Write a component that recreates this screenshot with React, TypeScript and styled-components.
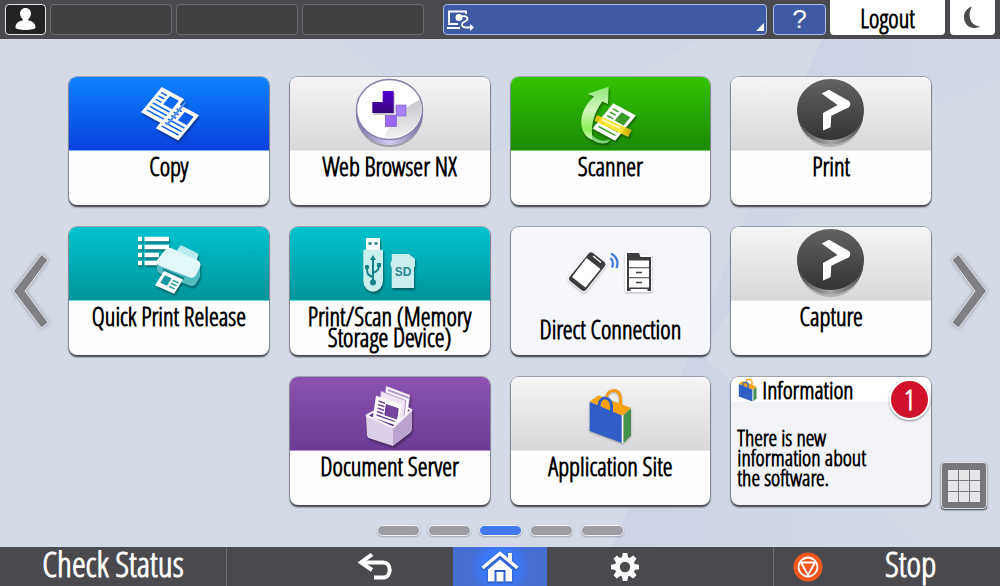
import React from "react";
import styled, { createGlobalStyle, css } from "styled-components";

const GlobalStyle = createGlobalStyle`
  * { box-sizing: border-box; }
  body { margin: 0; }
  body, button {
    font-family: "Open Sans Condensed Light", "Roboto Condensed", sans-serif;
    font-weight: 600;
  }
  button { margin: 0; padding: 0; border: 0; background: none; color: inherit; cursor: pointer; }
  svg { display: block; }
`;

const Page = styled.div`
  display: flex;
  flex-direction: column;
  min-height: 100vh;
  background: #d4dbe7;
`;

const StatusBar = styled.header`
  display: flex;
  align-items: flex-start;
  height: 39px;
  padding: 0 5px;
  background: #4a494e;
`;

const UserButton = styled.button`
  display: flex;
  justify-content: center;
  align-items: center;
  width: 41px;
  height: 31px;
  margin: 4px 4px 0 0;
  border: 1px solid #e4e4e6;
  border-radius: 4px;
  background: #232323;
`;

const Slots = styled.div`
  display: flex;
  flex: 374 1 0;
  gap: 4px;
  margin: 4px 19px 0 0;
`;

const Slot = styled.div`
  flex: 1;
  height: 31px;
  border: 1px solid #6c6b70;
  border-radius: 4px;
  background: #414141;
`;

const MessageBar = styled.button`
  display: flex;
  flex: 317 1 0;
  justify-content: space-between;
  align-items: flex-end;
  height: 31px;
  margin: 4px 6px 0 0;
  padding: 0 2px 3px 3px;
  border: 1px solid #a9bce6;
  border-radius: 4px;
  background: #3d5aa2;
`;

const HelpButton = styled.button`
  width: 53px;
  height: 31px;
  margin: 4px 4px 0 0;
  border: 1px solid #a9bce6;
  border-radius: 4px;
  background: #3d5aa2;
  color: #fff;
  font: 600 26px/29px "Liberation Sans", sans-serif;
  font-weight: 400;
`;

const BarButton = styled.button<{ $width: number }>`
  display: flex;
  justify-content: center;
  align-items: center;
  width: ${(p) => p.$width}px;
  height: 35px;
  border-radius: 0 0 4px 4px;
  background: #fff;
  color: #000;
  font-size: 25px;
  & + & { margin-left: 5px; }
`;

const Main = styled.main`
  position: relative;
  display: flex;
  flex: 1;
  flex-direction: column;
  padding-top: 38px;
`;

const Backdrop = styled.svg`
  position: absolute;
  inset: 0;
  width: 100%;
  height: 100%;
`;

const Stage = styled.div`
  position: relative;
  display: grid;
  grid-template-columns: 69px 1fr 69px;
`;

const Rail = styled.div`
  display: grid;
  grid-template-rows: 1fr auto 1fr;
  justify-items: center;
`;

const ArrowButton = styled.button<{ $side: "left" | "right" }>`
  grid-row: 2;
  justify-self: ${(p) => (p.$side === "left" ? "start" : "end")};
  margin: 0 10px 4px;
`;

const KeypadButton = styled.button`
  display: grid;
  grid-row: 3;
  grid-template-columns: repeat(3, 10px);
  align-self: end;
  align-content: center;
  justify-content: center;
  gap: 1px;
  width: 46px;
  height: 47px;
  margin-right: 4px;
  border: 1px solid #dfe0e4;
  border-radius: 4px;
  background: #77767b;
  box-shadow: 0 1px 2px #3a3a40;
`;

const Key = styled.span`
  height: 10px;
  background: #e6e6e8;
`;

const Tiles = styled.div`
  display: grid;
  grid-template-columns: repeat(4, 1fr);
  gap: 22px 21px;
  padding-bottom: 4px;
`;

const tileBox = css`
  display: flex;
  flex-direction: column;
  min-height: 128px;
  border-radius: 8px;
  box-shadow: 0 0 0 1px rgba(90, 90, 105, 0.45), 0 2px 2px #333339;
`;

const Tile = styled.button<{ $plain?: boolean; $column?: number }>`
  ${tileBox}
  grid-column: ${(p) => p.$column ?? "auto"};
  overflow: hidden;
  background: ${(p) => (p.$plain ? "#f6f7fb" : "#fefefe")};
`;

const banners = {
  blue: "linear-gradient(#0b82ff, #0a40dc)",
  grey: "linear-gradient(#f5f5f6, #d8d7d9)",
  green: "linear-gradient(#34c400, #1b8a04)",
  teal: "linear-gradient(#00c4cf, #00949b)",
  purple: "linear-gradient(#8c52b2, #6a3c95)",
  none: "none",
};
type BannerTone = keyof typeof banners;

const edges: Record<BannerTone, string> = {
  blue: "#6cb4ff",
  grey: "#e8e8ea",
  green: "#6edc4c",
  teal: "#54dde2",
  purple: "#b58fd0",
  none: "transparent",
};

const Banner = styled.span<{ $tone: BannerTone }>`
  display: flex;
  justify-content: center;
  width: 100%;
  height: 74px;
  border-bottom: 1px solid ${(p) => edges[p.$tone]};
  background: ${(p) => banners[p.$tone]};
`;

const TileLabel = styled.span<{ $low?: boolean }>`
  width: 100%;
  padding: ${(p) => (p.$low ? 18 : 5)}px 12px 0;
  color: #000;
  font-size: 25px;
  line-height: 21px;
  text-align: center;
`;

const InfoTile = styled.button`
  ${tileBox}
  position: relative;
  background: #f2f3f7;
  color: #000;
  text-align: left;
`;

const InfoTitle = styled.span`
  display: flex;
  align-items: center;
  gap: 5px;
  width: 100%;
  height: 25px;
  padding-left: 7px;
  border-radius: 8px 8px 0 0;
  background: #fff;
  font-size: 24px;
`;

const InfoText = styled.span`
  width: 150px;
  padding: 25px 0 0 6px;
  font-size: 22px;
  line-height: 20px;
`;

const Badge = styled.span`
  position: absolute;
  top: 2px;
  right: 1px;
  width: 41px;
  height: 41px;
  border: 2px solid #fff;
  border-radius: 50%;
  background: #cf112b;
  box-shadow: 0 1px 2px rgba(60, 60, 70, 0.6);
  color: #fff;
  font-size: 28px;
  line-height: 36px;
  text-align: center;
`;

const Pager = styled.nav`
  position: relative;
  display: flex;
  justify-content: center;
  gap: 8px;
  padding: 16px 0 11px;
`;

const PageDot = styled.button<{ $active: boolean }>`
  width: 43px;
  height: 11px;
  border: 1px solid #f2f3f6;
  border-radius: 6px;
  background: ${(p) => (p.$active ? "#4278ee" : "#9d9da3")};
  box-shadow: 0 1px 2px rgba(80, 80, 95, 0.4);
`;

const Footer = styled.footer`
  display: grid;
  grid-template-columns: 227px 1fr 227px;
  height: 39px;
  background: #4a494e;
  color: #fff;
`;

const FooterButton = styled.button<{ $edge: "left" | "right" }>`
  display: flex;
  align-items: center;
  justify-content: ${(p) => (p.$edge === "left" ? "center" : "flex-start")};
  gap: 62px;
  padding-left: ${(p) => (p.$edge === "left" ? 0 : 19)}px;
  border-${(p) => (p.$edge === "left" ? "right" : "left")}: 1px solid #706f74;
  font-size: 35px;
`;

const FooterText = styled.span`
  padding-bottom: 5px;
  line-height: 34px;
`;

const FooterNav = styled.nav`
  display: flex;
  justify-content: center;
`;

const NavButton = styled.button<{ $active?: boolean }>`
  display: flex;
  justify-content: center;
  align-items: center;
  width: ${(p) => (p.$active ? 94 : 156)}px;
  background: ${(p) => (p.$active ? "radial-gradient(circle, #3b7bff 30%, #466dd2 62%)" : "none")};
`;

/* A printed sheet, 24 by 32 units, drawn lying at an angle. */
function Sheet({ x, y, ink }: { x: number; y: number; ink: string }) {
  return (
    <g transform={`translate(${x} ${y}) matrix(.94 .51 -.647 .79 0 0)`}>
      <rect width="24" height="32" fill="#fff" />
      <rect x="11.5" y="4" width="9.5" height="10.5" fill={ink} />
      <path d="M3 5h6M3 9.3h6M3 13.6h6M3 18.2h18M3 22.7h18M3 27.2h18" stroke={ink} strokeWidth="1.5" />
    </g>
  );
}

const IconFrame = ({ children }: { children: React.ReactNode }) => (
  <svg width="100" height="73" viewBox="0 0 100 73" aria-hidden="true">{children}</svg>
);

const shadow = { filter: "drop-shadow(1px 2px 1px rgba(0,0,0,.4))" };

const CopyIcon = () => (
  <IconFrame>
    <g style={shadow}>
      <Sheet x={57.5} y={26} ink="#0c5cec" />
      <path d="M66.500 25 48 48" stroke="#4d8ff4" strokeWidth="2" />
      <Sheet x={42.7} y={10} ink="#0b66f0" />
    </g>
  </IconFrame>
);

const BrowserIcon = () => (
  <IconFrame>
    <defs>
      <linearGradient id="rim" x1="0" x2="1"><stop offset="0" stopColor="#77729f" /><stop offset=".5" stopColor="#d2cef0" /><stop offset="1" stopColor="#77729f" /></linearGradient>
      <linearGradient id="dark" x1="0" y1="0" x2="0" y2="1"><stop offset="0" stopColor="#5600d0" /><stop offset="1" stopColor="#35047c" /></linearGradient>
      <linearGradient id="face" x1="0" y1="0" x2="0" y2="1"><stop offset="0" stopColor="#c9c9cd" /><stop offset="1" stopColor="#f0f0f2" /></linearGradient>
    </defs>
    <ellipse cx="49.5" cy="39" rx="33" ry="31" fill="#77757c" opacity=".6" />
    <ellipse cx="49.5" cy="37" rx="33.5" ry="31" fill="url(#rim)" />
    <ellipse cx="49.5" cy="32.5" rx="33" ry="30" fill="#fff" stroke="#8580ac" strokeWidth="1.5" />
    <path d="M44 59c10-17 22-31 36-36 6 18-6 36-31 38z" fill="url(#face)" />
    <path d="M43.7 16h11v22H33.3V27h10.4z" fill="#000" opacity=".22" />
    <path d="M42.7 14h11v22H32.3V25h10.4z" fill="url(#dark)" />
    <rect x="56" y="28" width="10" height="11" fill="#a982fb" stroke="#7b5ac8" strokeWidth=".6" />
    <rect x="45.3" y="38.5" width="11" height="11" fill="#9a67f8" stroke="#7149c8" strokeWidth=".6" />
  </IconFrame>
);

const ScannerIcon = () => (
  <IconFrame>
    <defs>
      <linearGradient id="sweep" x1="0" y1="0" x2="0" y2="1"><stop offset="0" stopColor="#8fe67b" /><stop offset=".45" stopColor="#d2f7bd" /><stop offset=".8" stopColor="#8af055" /><stop offset="1" stopColor="#d8f8cc" /></linearGradient>
      <linearGradient id="scanbar" x1="0" x2="1"><stop offset="0" stopColor="#f2c000" /><stop offset=".3" stopColor="#ffe620" /><stop offset=".7" stopColor="#ffe620" /><stop offset="1" stopColor="#e0a800" /></linearGradient>
    </defs>
    <g style={shadow}>
      <path d="M32 58c6 6 12 7 19 4l-4 4c-6 1-11 0-14-3z" fill="#7fd37a" />
      <path d="M48.7 9.7 27.7 16.7 34 19.5C24 29 21 38 21.3 47c.5 8 5 14 11.700 16C30 52 33 37 42.3 24.500L48 27z" fill="url(#sweep)" />
      <Sheet x={53.3} y={26.3} ink="#3d9c2c" />
      <path d="M37 38 71.7 53 68.3 60 34.5 43.7z" fill="url(#scanbar)" opacity=".9" />
      <path d="M42 42.500 60 51" stroke="#fffbd0" strokeWidth="1.5" />
    </g>
  </IconFrame>
);

const PrintAppIcon = () => (
  <IconFrame>
    <defs>
      <linearGradient id="disc" x1="0" y1="0" x2="0" y2="1"><stop offset="0" stopColor="#626163" /><stop offset="1" stopColor="#343336" /></linearGradient>
      <linearGradient id="discside" x1="0" x2="1"><stop offset="0" stopColor="#4b4a4c" /><stop offset=".5" stopColor="#a6a5a7" /><stop offset="1" stopColor="#4b4a4c" /></linearGradient>
    </defs>
    <ellipse cx="49.5" cy="39" rx="32" ry="31" fill="#8a898c" opacity=".5" />
    <ellipse cx="49.5" cy="36.5" rx="33" ry="31" fill="url(#discside)" />
    <ellipse cx="49.5" cy="32.5" rx="33.5" ry="30.5" fill="url(#disc)" />
    <path d="M48 12.700 68 24q2.500 3 0 6.300L50.300 38.700 49.600 50.300 42 53.500V36L56.500 28 40.700 16.500z" fill="#fff" />
  </IconFrame>
);

const QuickPrintIcon = () => (
  <IconFrame>
    <g style={shadow}>
      <path d="M19 12h4M25.500 12H50M19 20h4M25.500 20H50M19 28h4M25.500 28H40M19 36h4M25.500 36H40" stroke="#fff" strokeWidth="4.300" />
      <path d="M61 19q1-1 3 0l14 7q2 1 1 3l-2 7-21-10z" fill="#b9ecee" />
      <path d="M38 35v7q0 3 4 5l27 11q6 3 9-3l3-5V38z" fill="#52bcc2" />
      <path d="M47 22q2-2 5-1l26 12q5 3 3 7l-4 8q-2 4-7 2L41 39q-4-2-3-6z" fill="#e2f7f8" />
      <path d="M44 43 65 52" stroke="#16858c" strokeWidth="3" />
      <g transform="translate(45 44) matrix(.95 .43 -.47 .75 0 0)">
        <rect width="20" height="19" fill="#fff" />
        <rect x="3" y="4" width="7" height="10" fill="#14959c" />
        <path d="M12 5.500h6M12 9.500h6M12 13.500h6" stroke="#14959c" strokeWidth="1.600" />
      </g>
    </g>
  </IconFrame>
);

const StorageIcon = () => (
  <IconFrame>
    <g style={shadow}>
      <path d="M26 11h14v12H26z" fill="#fff" />
      <path d="M28.500 16.500h3M34.500 16.500h3" stroke="#158087" strokeWidth="2.500" />
      <path d="M23.300 22.700h19.700V54a9.800 10.600 0 0 1-19.700 0z" fill="#c9eeee" />
      <path d="M51.700 27h17.300l6 5v7l-1 2v20H51.700V41l-1-2v-4l1-1z" fill="#c9eeee" />
    </g>
    <path d="M33 30v25M33 50c-6-2-6-4-6-10M33 46c5-2 6-4 6-8" fill="none" stroke="#158087" strokeWidth="2" />
    <circle cx="33" cy="55.500" r="3" fill="#158087" />
    <circle cx="27" cy="40" r="2.200" fill="#158087" />
    <path d="M37 36h4v4h-4zM33 28l-3 5h6z" fill="#158087" />
    <text x="63" y="49" textAnchor="middle" fontFamily="Liberation Sans" fontWeight="700" fontSize="12" fill="#26868c">SD</text>
  </IconFrame>
);

const DirectIcon = () => (
  <IconFrame>
    <g transform="translate(1 0)">
      <g style={{ filter: "drop-shadow(0 1px 1px rgba(80,80,90,.4))" }}>
        <path d="M28 26q2-1.500 4 0l11.500 9q2 2 .5 4L25 63q-2 2-4 .5L9 54q-2-2-.5-4z" fill="#3d3d40" stroke="#fff" strokeWidth="2" paintOrder="stroke" />
        <path d="M25.500 31 39.500 42 24.500 60.500 11 50z" fill="#fff" />
        <path d="M32 29 40 35.500" stroke="#fff" strokeWidth="1.200" />
        <path d="M65 25h12l3 4h10v35H65z" fill="#fff" stroke="#fff" strokeWidth="2" />
      </g>
      <path d="M49.500 31q4 4 1.500 9.500M50 26.500q9 5 5.500 14.500" fill="none" stroke="#3f78e8" strokeWidth="2.200" />
      <path d="M66 26h12l1.500 4h10.500v34h-3.500v-2H69.500v2H66z" fill="#3d3d40" />
      <path d="M68 33.500H88V40.200H68zM68 41.200H88V50.200H68zM68 51.200H88V60.500H68z" fill="#fff" />
      <path d="M75 45.500h6M75 55.500h6" stroke="#3d3d40" strokeWidth="1.600" />
    </g>
  </IconFrame>
);

const DocumentServerIcon = () => (
  <IconFrame>
    <g style={shadow}>
      <path d="M26 39 35 34 72 33 53 51.500z" fill="#56307c" />
      <path d="M46 9 70 18 67 42 44 32z" fill="#fff" stroke="#a684c4" strokeWidth=".6" />
      <path d="M48 13 69 21" stroke="#b79acf" strokeWidth="2" />
      <path d="M41 14 66 23.500 63 46 38 34z" fill="#eee4f6" stroke="#a07cc0" strokeWidth=".8" />
      <g transform="translate(36 18.700) matrix(1.060 .37 -.1 .7 0 0)">
        <rect width="24" height="31" fill="#fff" />
        <rect x="10.500" y="7" width="11" height="15" fill="#7545a0" stroke="#59318a" />
        <path d="M3 6h6M3 11h6M3 16h6M3 21h6M3 26h17" stroke="#6b3c98" strokeWidth="1.900" />
      </g>
      <path d="M26 39 53 50.500V69L30 61.500q-3-1-3-4z" fill="#dccfe8" />
      <path d="M53 50.500 72 33v19q0 2-2 4L53 69z" fill="#baa2d0" />
      <path d="M34 34.500 26.500 38.500 53 50.500 71.500 33 68 31" fill="none" stroke="#f5effa" strokeWidth="2" strokeLinejoin="round" />
    </g>
  </IconFrame>
);

const BagShape = () => (
  <g>
    <path d="M45.500 27v-6c0-11 14-11 14-1v8" fill="none" stroke="#f39b0b" strokeWidth="3" />
    <path d="M28.700 23.500 37.500 17.500 70 30 61 38z" fill="#f7a30a" />
    <path d="M28.700 24 61 37.500V65L28.700 53z" fill="#305ec4" />
    <path d="M62.500 37.500 70 30.500V57.500L62.500 65z" fill="#44904f" />
    <path d="M61.500 37v28" stroke="#fff" strokeWidth="1.500" />
    <path d="M38 34v-6c0-11 12.500-10 12.500 0v10" fill="none" stroke="#305ec4" strokeWidth="3" />
  </g>
);

const SiteIcon = () => (
  <IconFrame><g transform="translate(1 1)" style={{ filter: "drop-shadow(0 1px 1px rgba(60,60,60,.4))" }}><BagShape /></g></IconFrame>
);

function Arrow({ flip }: { flip?: boolean }) {
  return (
    <svg width="42" height="80" viewBox="0 0 42 80" aria-hidden="true" style={{ filter: "drop-shadow(0 0 2px rgba(90,90,100,.6))" }}>
      <path
        d="M31.500 3.500 3.500 40 31.500 77 38 71.500 15 40 38 9z"
        transform={flip ? "translate(42 0) scale(-1 1)" : undefined}
        fill="#807f84"
        stroke="#e9eaee"
        strokeWidth="1"
      />
    </svg>
  );
}

const gearTeeth = [0, 45, 90, 135, 180, 225, 270, 315];

type App = { label: string; tone: BannerTone; icon: React.ReactNode; column?: number };

const apps: App[] = [
  { label: "Copy", tone: "blue", icon: <CopyIcon /> },
  { label: "Web Browser NX", tone: "grey", icon: <BrowserIcon /> },
  { label: "Scanner", tone: "green", icon: <ScannerIcon /> },
  { label: "Print", tone: "grey", icon: <PrintAppIcon /> },
  { label: "Quick Print Release", tone: "teal", icon: <QuickPrintIcon /> },
  { label: "Print/Scan (Memory Storage Device)", tone: "teal", icon: <StorageIcon /> },
  { label: "Direct Connection", tone: "none", icon: <DirectIcon /> },
  { label: "Capture", tone: "grey", icon: <PrintAppIcon /> },
  { label: "Document Server", tone: "purple", icon: <DocumentServerIcon />, column: 2 },
  { label: "Application Site", tone: "grey", icon: <SiteIcon /> },
];

export default function HomeScreen() {
  return (
    <Page>
      <GlobalStyle />
      <StatusBar>
        <UserButton aria-label="User">
          <svg width="21" height="23" viewBox="0 0 21 23" fill="#fff" aria-hidden="true">
            <path d="M10.500 0c3.500 0 5.500 2.500 5.500 5.500 0 2.500-1.300 4.500-2.700 5.500v1.500c4.500.8 7.200 3 7.200 7 0 1.500-5 2.500-10 2.500s-10-1-10-2.500c0-4 2.700-6.200 7.200-7V11C6.300 10 5 8 5 5.500 5 2.500 7 0 10.500 0z" />
          </svg>
        </UserButton>
        <Slots><Slot /><Slot /><Slot /></Slots>
        <MessageBar aria-label="System messages">
          <svg width="28" height="21" viewBox="0 0 28 21" fill="none" stroke="#fff" strokeWidth="1.800" aria-hidden="true">
            <path d="M19 4V1.500H2V14h9M0 18h13" />
            <circle cx="12" cy="7.500" r="2.600" fill="#fff" />
            <path d="M12 7.500c3-2 8.500-2 8.500 1.500 0 3-5.500 2-5.500 5.500 0 2.500 3 3 5 3h4" />
            <path d="M23 14 27 17.500 23 21z" fill="#fff" stroke="none" />
          </svg>
          <svg width="8" height="8" viewBox="0 0 8 8" aria-hidden="true"><path d="M8 0v8H0z" fill="#fff" /></svg>
        </MessageBar>
        <HelpButton aria-label="Help">?</HelpButton>
        <BarButton $width={115}>Logout</BarButton>
        <BarButton $width={45} aria-label="Energy saver">
          <svg width="17" height="23" viewBox="0 0 17 23" aria-hidden="true"><path d="M8 .5C1 3 0 8 0 11c0 7 5 11 10 11 3 0 5-.7 6-1.700C7 20 2.500 10 8 .5z" fill="#4b4a4e" /></svg>
        </BarButton>
      </StatusBar>

      <Main>
        <Backdrop viewBox="0 0 1000 508" preserveAspectRatio="none" aria-hidden="true">
          <defs>
            <linearGradient id="facetA" x1="0" y1="0" x2="1" y2="0"><stop offset="0" stopColor="#cbd2e5" /><stop offset="1" stopColor="#d3dae7" /></linearGradient>
            <linearGradient id="facetB" x1="0" y1="0" x2="1" y2="0"><stop offset="0" stopColor="#cdd3e5" /><stop offset="1" stopColor="#d3dae7" /></linearGradient>
          </defs>
          <path d="M822 0H1000V42L765 130z" fill="url(#facetA)" />
          <path d="M765 130 612 508H925L700 315 850 100z" fill="url(#facetB)" />
          <path d="M340 0 480 120 700 0z" fill="#d1d8e6" />
        </Backdrop>
        <Stage>
          <Rail>
            <ArrowButton $side="left" aria-label="Previous page"><Arrow /></ArrowButton>
          </Rail>
          <Tiles>
            {apps.map((app) => (
              <Tile key={app.label} $plain={app.tone === "none"} $column={app.column}>
                <Banner $tone={app.tone}>{app.icon}</Banner>
                <TileLabel $low={app.tone === "none"}>{app.label}</TileLabel>
              </Tile>
            ))}
            <InfoTile>
              <InfoTitle>
                <svg width="19" height="24" viewBox="27 10 44 56" aria-hidden="true"><BagShape /></svg>
                Information
              </InfoTitle>
              <InfoText>There is new information about the software.</InfoText>
              <Badge>1</Badge>
            </InfoTile>
          </Tiles>
          <Rail>
            <ArrowButton $side="right" aria-label="Next page"><Arrow flip /></ArrowButton>
            <KeypadButton aria-label="Application list">
              {Array.from({ length: 9 }, (_, i) => <Key key={i} />)}
            </KeypadButton>
          </Rail>
        </Stage>
        <Pager aria-label="Pages">
          {[1, 2, 3, 4, 5].map((n) => <PageDot key={n} $active={n === 3} aria-label={`Page ${n}`} />)}
        </Pager>
      </Main>

      <Footer>
        <FooterButton $edge="left"><FooterText>Check Status</FooterText></FooterButton>
        <FooterNav>
          <NavButton aria-label="Back">
            <svg width="36" height="28" viewBox="0 0 36 28" fill="none" stroke="#fff" strokeWidth="4" aria-hidden="true">
              <path d="M5 9.500h21c9 0 9 15 0 15h-9" />
              <path d="M15 1.500 4 9.500l11 7.500" />
            </svg>
          </NavButton>
          <NavButton $active aria-label="Home">
            <svg width="38" height="31" viewBox="0 0 38 31" aria-hidden="true" style={{ filter: "drop-shadow(0 1px 1px #23408c)" }}>
              <path d="M1.500 17 19 2.500 36.500 17" fill="none" stroke="#fff" strokeWidth="3.500" />
              <path d="M27 2h4v8.500l-4-3.500zM7 18.500 19 8.500l12 10v12h-6.500V19H13.500v11.500H7z" fill="#fff" />
              <path d="M15.500 21h7v9.500h-7z" fill="#fff" />
            </svg>
          </NavButton>
          <NavButton aria-label="Settings">
            <svg width="30" height="30" viewBox="-15 -15 30 30" aria-hidden="true">
              {gearTeeth.map((a) => <path key={a} d="M-3.300-8-2.300-14h4.600l1 6z" transform={`rotate(${a})`} fill="#fff" />)}
              <circle r="7.700" fill="none" stroke="#fff" strokeWidth="5" />
            </svg>
          </NavButton>
        </FooterNav>
        <FooterButton $edge="right">
          <svg width="30" height="30" viewBox="-15 -15 30 30" aria-hidden="true">
            <circle r="14.500" fill="#f9581f" />
            <circle r="9.500" fill="none" stroke="#fff" strokeWidth="1.800" />
            <path d="M-7-4.500H7L0 8z" fill="#f9581f" stroke="#fff" strokeWidth="1.800" strokeLinejoin="round" />
          </svg>
          <FooterText>Stop</FooterText>
        </FooterButton>
      </Footer>
    </Page>
  );
}
